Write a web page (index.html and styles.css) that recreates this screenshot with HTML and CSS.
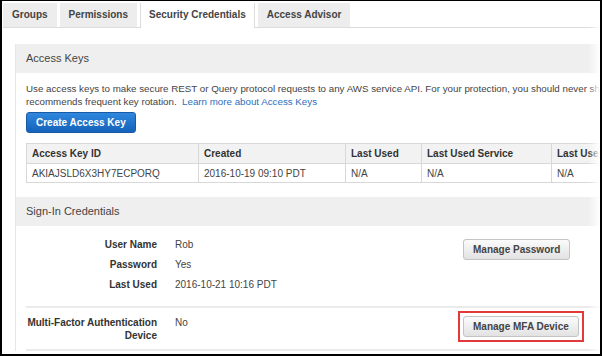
FILE: index.html
```html
<!DOCTYPE html>
<html lang="en">
<head>
    <meta charset="UTF-8">
    <meta name="viewport" content="width=device-width, initial-scale=1.0">
    <title>Security Credentials</title>
    <link rel="stylesheet" href="styles.css">
</head>
<body>
    <div class="frame">
        <div class="tabs">
            <div class="tab">Groups</div>
            <div class="tab">Permissions</div>
            <div class="tab active">Security Credentials</div>
            <div class="tab">Access Advisor</div>
        </div>

        <div class="main">
            <div class="panel">
                <div class="panel-head">Access Keys</div>
                <div class="panel-body">
                    <p class="intro">
                        Use access keys to make secure REST or Query protocol requests to any AWS service API. For your protection, you should never share your secret keys with anyone. As a best practice, we<br>
                        recommends frequent key rotation.&nbsp; <a href="#" class="link">Learn more about Access Keys</a>
                    </p>
                    <button type="button" class="btn-primary">Create Access Key</button>

                    <table class="keys">
                        <thead>
                            <tr>
                                <th class="c1">Access Key ID</th>
                                <th class="c2">Created</th>
                                <th class="c3">Last Used</th>
                                <th class="c4">Last Used Service</th>
                                <th class="c5">Last Used Region</th>
                            </tr>
                        </thead>
                        <tbody>
                            <tr>
                                <td>AKIAJSLD6X3HY7ECPORQ</td>
                                <td>2016-10-19 09:10 PDT</td>
                                <td>N/A</td>
                                <td>N/A</td>
                                <td>N/A</td>
                            </tr>
                        </tbody>
                    </table>
                </div>

                <div class="panel-head">Sign-In Credentials</div>
                <div class="cred-group">
                    <div class="label">User Name</div>
                    <div class="value">Rob</div>
                    <div class="label">Password</div>
                    <div class="value">Yes</div>
                    <div class="label">Last Used</div>
                    <div class="value">2016-10-21 10:16 PDT</div>
                    <button type="button" class="btn side">Manage Password</button>
                </div>
                <div class="cred-group mfa">
                    <div class="label">Multi-Factor Authentication<br>Device</div>
                    <div class="value">No</div>
                    <div class="side marked">
                        <button type="button" class="btn">Manage MFA Device</button>
                    </div>
                </div>
            </div>
        </div>

        <div class="fade"></div>
    </div>
</body>
</html>
```

FILE: styles.css
```css
* {
    margin: 0;
    padding: 0;
    box-sizing: border-box;
}

body {
    font-family: "Liberation Sans", Arial, sans-serif;
    font-size: 10px;
    color: #444;
    background: #fff;
}

.frame {
    width: 602px;
    height: 356px;
    border: solid #000;
    border-width: 1px 2px 2px 2px;
    overflow: hidden;
    position: relative;
    background: #fff;
}

.tabs {
    display: flex;
    gap: 3px;
    margin: 2px 0 0 1px;
    border-bottom: 1px solid #dcdcdc;
    height: 25px;
}

.tab {
    height: 24px;
    line-height: 23px;
    padding: 0 9px;
    background: #ededed;
    font-weight: bold;
    font-size: 10px;
    color: #444;
    white-space: nowrap;
}

.tab.active {
    background: #fff;
    height: 25px;
    padding: 0 8px;
    border: 1px solid #dcdcdc;
    border-bottom: none;
    border-top: none;
}

.main {
    padding: 16px 0 0 13px;
}

.panel {
    width: 700px;
    border-left: 1px solid #e6e6e6;
}

.panel-head {
    height: 29px;
    line-height: 29px;
    padding-left: 10px;
    background: #efefef;
    font-size: 11px;
    color: #444;
}

.panel-body {
    padding: 9px 10px 14px;
}

.intro {
    font-size: 9.75px;
    line-height: 13px;
    white-space: nowrap;
    margin-bottom: 4px;
}

.link {
    color: #2a6fbf;
    text-decoration: none;
}

.btn-primary {
    height: 21px;
    padding: 0 9px;
    font-family: inherit;
    font-size: 10px;
    font-weight: bold;
    color: #fff;
    background: linear-gradient(#2f87de, #1562b9);
    border: 1px solid #1a5aa5;
    border-radius: 3px;
}

.keys {
    margin-top: 10px;
    border-collapse: collapse;
    table-layout: fixed;
    width: 610px;
}

.keys th,
.keys td {
    border: 1px solid #d8d8d8;
    padding: 0 5px;
    text-align: left;
    white-space: nowrap;
    overflow: hidden;
}

.keys th {
    height: 20px;
    background: #f2f2f2;
    font-weight: bold;
    color: #333;
}

.keys td {
    height: 19px;
}

.c1 { width: 172px; }
.c2 { width: 147px; }
.c3 { width: 76px; }
.c4 { width: 130px; }
.c5 { width: 85px; }

.cred-group {
    display: grid;
    grid-template-columns: 131px 306px auto;
    grid-auto-rows: 20px;
    align-items: center;
    margin: 0 0 0 10px;
    padding: 8px 0 12px;
    border-bottom: 2px solid #ebebeb;
}

.label {
    grid-column: 1;
    text-align: right;
    font-weight: bold;
    color: #333;
}

.value {
    grid-column: 2;
    padding-left: 18px;
}

.side {
    grid-column: 3;
    grid-row: 1 / span 3;
    align-self: start;
    justify-self: start;
    margin-top: 5px;
}

.cred-group.mfa {
    grid-auto-rows: auto;
    align-items: start;
    padding: 8px 0 7px;
}

.mfa .label,
.mfa .value {
    line-height: 13px;
}

.mfa .side {
    grid-row: 1;
}

.marked {
    display: flex;
    margin: -5px 0 0 -5px;
    padding: 3px;
    border: 2px solid #e23a3a;
}

.btn {
    height: 21px;
    padding: 0 9px;
    font-family: inherit;
    font-size: 10px;
    font-weight: bold;
    color: #444;
    background: linear-gradient(#fbfbfb, #e2e2e2);
    border: 1px solid #c4c4c4;
    border-radius: 3px;
    white-space: nowrap;
}

.fade {
    position: absolute;
    top: 0;
    right: 0;
    width: 12px;
    height: 100%;
    background: linear-gradient(to right, rgba(255, 255, 255, 0), #fff);
}
```
